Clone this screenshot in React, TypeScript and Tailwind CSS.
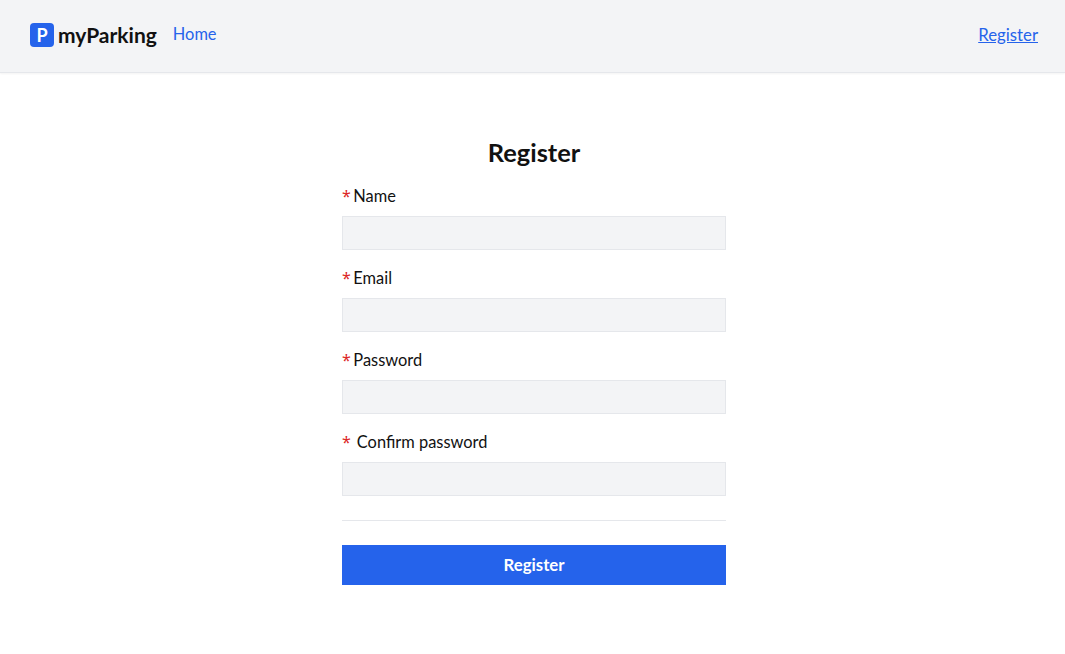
function Field({ label, gap }: { label: string; gap?: boolean }) {
  return (
    <div className="mb-[16px]">
      <label className="block h-[32px] text-[16.4px] leading-6 text-[#111]">
        <span className={gap ? "mr-[6px] font-['Noto_Sans',sans-serif] text-base text-[#dc2626]" : "mr-[2.5px] font-['Noto_Sans',sans-serif] text-base text-[#dc2626]"}>*</span>
        {label}
      </label>
      <input className="block h-[34px] w-full border border-[#e5e7eb] bg-[#f3f4f6] px-3 outline-none" />
    </div>
  )
}

export default function App() {
  return (
    <div className="min-h-[654px] bg-white font-['Lato',sans-serif]">
      <nav className="flex h-[73px] items-center justify-between border-b border-[#e5e7eb] bg-[#f3f4f6] pb-[3px] pl-[30px] pr-[27px] shadow-[0_1px_2px_rgba(0,0,0,0.05)]">
        <div className="flex items-center gap-4">
          <a className="flex items-center gap-1 text-[21px] font-bold text-[#111]">
            <span className="flex h-6 w-6 items-center justify-center rounded bg-[#2563eb] text-lg leading-none text-white">P</span>
            myParking
          </a>
          <a className="text-[16.4px] text-[#2563eb]">Home</a>
        </div>
        <a className="text-[16.8px] text-[#2563eb] underline">Register</a>
      </nav>

      <main className="flex justify-center pl-[3px] pt-[63px]">
        <div className="w-[384px]">
          <h1 className="mb-[16px] text-center text-[25.4px] leading-8 font-bold text-[#111]">Register</h1>
          <form>
            <Field label="Name" />
            <Field label="Email" />
            <Field label="Password" />
            <Field label="Confirm password" gap />
            <div className="mt-[24px] border-t border-[#e5e7eb] pt-[24px]">
              <button type="button" className="h-10 w-full bg-[#2563eb] text-[16.8px] font-bold text-white">Register</button>
            </div>
          </form>
        </div>
      </main>
    </div>
  )
}
